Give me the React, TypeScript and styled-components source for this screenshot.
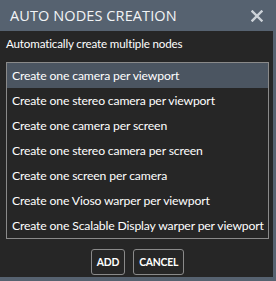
import styled, { createGlobalStyle } from 'styled-components'

const GlobalStyle = createGlobalStyle`
  html, body {
    margin: 0;
    padding: 0;
    background: #566270;
  }
  body {
    font-family: Lato, 'Open Sans', sans-serif;
  }
`

const options = [
  'Create one camera per viewport',
  'Create one stereo camera per viewport',
  'Create one camera per screen',
  'Create one stereo camera per screen',
  'Create one screen per camera',
  'Create one Vioso warper per viewport',
  'Create one Scalable Display warper per viewport',
]

const App = () => {
  return (
    <>
      <GlobalStyle />
      <Window>
        <TitleBar>
          <Title>AUTO NODES CREATION</Title>
          <CloseButton aria-label="close">
            <svg width="12" height="12" viewBox="0 0 12 12">
              <path
                d="M1.5 1.5 L10.5 10.5 M10.5 1.5 L1.5 10.5"
                stroke="#cdd3d9"
                strokeWidth="2.4"
                strokeLinecap="square"
              />
            </svg>
          </CloseButton>
        </TitleBar>
        <Body>
          <Description>Automatically create multiple nodes</Description>
          <OptionList>
            {options.map((text, i) => (
              <OptionRow key={text} selected={i === 0}>
                {text}
              </OptionRow>
            ))}
          </OptionList>
          <ButtonRow>
            <ActionButton>ADD</ActionButton>
            <ActionButton>CANCEL</ActionButton>
          </ButtonRow>
        </Body>
      </Window>
    </>
  )
}

const Window = styled.div`
  width: 276px;
  height: 281px;
  display: flex;
  flex-direction: column;
  background: #566270;
  overflow: hidden;
`

const TitleBar = styled.div`
  height: 31px;
  flex-shrink: 0;
  display: flex;
  align-items: center;
  justify-content: space-between;
  padding: 0 13px 0 10px;
  box-sizing: border-box;
`

const Title = styled.div`
  color: #f2f4f6;
  font-family: 'Open Sans', sans-serif;
  font-size: 14.5px;
  font-weight: 400;
  letter-spacing: 0.1px;
`

const CloseButton = styled.div`
  display: flex;
  width: 12px;
  height: 12px;
`

const Body = styled.div`
  width: 273px;
  height: 246px;
  box-sizing: border-box;
  background: #262626;
  padding: 3px 4px 0 6px;
  display: flex;
  flex-direction: column;
`

const Description = styled.div`
  color: #ffffff;
  font-size: 11.6px;
  letter-spacing: -0.15px;
  line-height: 20px;
`

const OptionList = styled.div`
  margin-top: 8px;
  border: 1px solid #8a8a8a;
  display: flex;
  flex-direction: column;
  overflow: hidden;
`

const OptionRow = styled.div<{ selected: boolean }>`
  height: 25px;
  line-height: 25px;
  padding-left: 5px;
  font-size: 12.2px;
  letter-spacing: -0.15px;
  color: #ffffff;
  white-space: nowrap;
  background: ${({ selected }: { selected: boolean }) =>
    selected ? '#4b5561' : 'transparent'};
`

const ButtonRow = styled.div`
  display: flex;
  justify-content: center;
  gap: 8px;
  margin-top: 10px;
`

const ActionButton = styled.button`
  height: 26px;
  padding: 0 5px;
  border: 1px solid #8a8a8a;
  border-radius: 3px;
  background: #262626;
  color: #ffffff;
  font-family: Lato, sans-serif;
  font-size: 10.4px;
  font-weight: 700;
  letter-spacing: -0.2px;
`

export default App
